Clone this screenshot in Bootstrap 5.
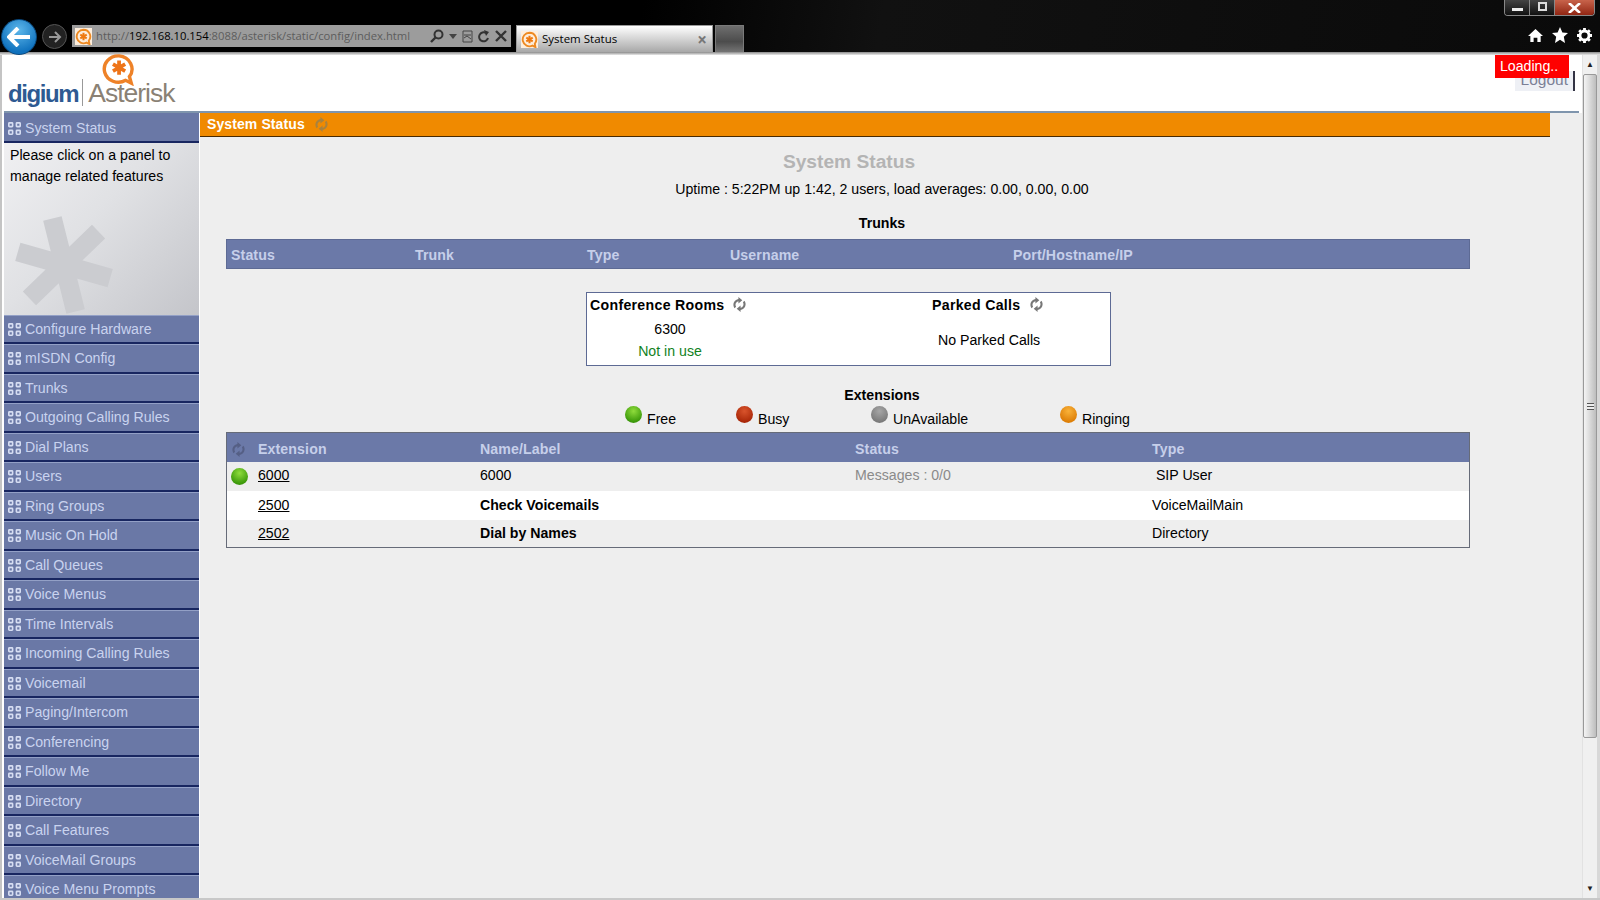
<!doctype html>
<html lang="en">
<head>
<meta charset="UTF-8" />
<title>System Status</title>
<link href="https://cdn.jsdelivr.net/npm/bootstrap@5.3.0/dist/css/bootstrap.min.css" rel="stylesheet" />
<style>
  html, body { height: 100%; overflow: hidden; }
  body { font-family: "Liberation Sans", Arial, sans-serif; font-size: 14.15px; color: #000; background: #eee; }
  .app-shell { width: 1600px; height: 900px; overflow: hidden; }

  /* browser chrome */
  .chrome { height: 52px; flex: none; background: linear-gradient(100deg, #000 40%, #111 55%, #0a0a0a 100%); position: relative; }
  .chrome-line { height: 3px; flex: none; background: linear-gradient(#8a8a8a, #e8e8e8); }
  .nav-cluster { padding-top: 19px; padding-left: 1px; gap: 5px; }
  .back-btn { width: 36px; height: 36px; border-radius: 50%; background: radial-gradient(circle at 50% 30%, #5cb6ea, #0f71bd 75%); border: 1px solid #0a4a80; }
  .fwd-btn { width: 25px; height: 25px; border-radius: 50%; background: #222; border: 1px solid #555; margin-top: 5px; }
  .addr-bar { width: 439px; height: 22px; margin-top: 6px; background: #9c9c9c; padding-left: 3px; font-family: "Open Sans", sans-serif; font-size: 11.25px; color: #5c5c5c; white-space: nowrap; }
  .addr-bar b { font-weight: 400; color: #000; }
  .addr-url { width: 328px; margin-left: 4px; }
  .addr-tools { gap: 5px; margin-left: 6px; }
  .tab-active { width: 197px; height: 27px; margin-top: 6px; background: linear-gradient(#fff, #a8a8a8); border: 1px solid #9a9a9a; border-bottom: 0; font-family: "Open Sans", sans-serif; font-size: 11.5px; padding: 0 5px 0 4px; }
  .tab-x { color: #777; font-size: 17px; font-weight: 700; line-height: 1; }
  .tab-new { width: 29px; height: 27px; margin-top: 6px; margin-left: -3px; background: linear-gradient(#6e6e6e, #4c4c4c 60%, #747474); border: 1px solid #7a7a7a; border-bottom: 0; }
  .win-btns { position: absolute; top: 0; right: 5px; width: 91px; height: 16px; border: 1px solid #888; border-top: 0; border-radius: 0 0 4px 4px; overflow: hidden; }
  .win-min, .win-max { width: 25px; background: linear-gradient(#444, #111); border-right: 1px solid #888; }
  .win-min span { width: 11px; height: 3px; background: #eee; margin-top: 8px; }
  .win-max span { width: 9px; height: 9px; border: 2px solid #ddd; margin-top: 2px; }
  .win-close { flex: 1; background: linear-gradient(#c8634b, #912613); }
  .tool-icons { position: absolute; top: 27px; right: 8px; gap: 9px; }

  /* page */
  .page-body { min-height: 0; }
  .page-main { min-width: 0; }
  .page-rows { min-height: 0; }
  .edge-strip { width: 2px; flex: none; background: #c4c4c4; }
  .top-head { height: 58px; flex: none; background: #fff; position: relative; }
  .head-rule { position: absolute; left: 2px; right: 3px; bottom: 0; height: 2px; background: #7f95ad; }
  .logo-wrap { padding: 0 0 0 6px; position: relative; height: 54px; }
  .logo-digium { font-size: 24px; font-weight: 700; letter-spacing: -1.4px; color: #2e5a92; line-height: 1; margin-top: 27px; }
  .logo-sep { width: 1px; height: 27px; background: #999; margin: 24px 5px 0 4px; }
  .logo-aster { font-size: 26.5px; color: #8a8174; letter-spacing: -1px; line-height: 1; margin-top: 25px; }
  .logo-bubble { position: absolute; left: 98px; top: -1px; }
  .logout-tab { position: absolute; right: 7px; top: 16px; width: 60px; height: 20px; background: #eef0f5; border-right: 2px solid #334; color: #7b7f96; font-size: 15.5px; text-align: right; padding-right: 5px; line-height: 18px; }
  .loading-tag { position: absolute; right: 13px; top: 0; width: 74px; height: 23px; background: #f00; color: #fff; line-height: 22px; padding-left: 5px; }

  .side-col { width: 198px; flex: none; background: #fff; padding-left: 2px; padding-right: 1px; overflow: hidden; }
  .menu-item { height: 29.5px; flex: none; background: #6a78a6; color: #c9d3ef; border-bottom: 2px solid #182660; border-top: 1px solid #93a0c6; padding: 1px 0 0 4px; gap: 4px; white-space: nowrap; }
  .menu-first { border-top-color: #6a78a6; padding-top: 3px; }
  .side-panel { height: 172px; flex: none; position: relative; padding: 2px 6px; line-height: 21.5px; background: linear-gradient(135deg, #f0f0f2 0%, #e0e1e4 45%, #c4c5ca 100%); overflow: hidden; }
  .side-star { position: absolute; left: 10px; top: 72px; }

  .work-col { min-width: 0; background: #eee; }
  .title-strip { width: 1350px; height: 24px; background: #f08a00; border-bottom: 1px solid #4a2a00; color: #fff; font-weight: 700; letter-spacing: .1px; padding-left: 7px; gap: 9px; font-size: 14px; }
  .page-title { width: 1298px; text-align: center; font-size: 19.2px; font-weight: 700; color: #b4b4b4; line-height: 24px; margin-top: 13px; }
  .centre-line { width: 1364px; text-align: center; line-height: 20px; }
  .uptime-line { margin-top: 5px; }
  .trunks-head { margin-top: 14px; font-weight: 700; }
  .data-tbl { width: 1244px; margin-left: 26px; background: #eee; border: 1px solid #5d6a94; table-layout: fixed; border-collapse: separate; border-spacing: 0; }
  .data-tbl th { background: #6b79a8; color: #c6cfea; font-weight: 700; height: 28px; padding: 4px 0 0 4px; vertical-align: middle; letter-spacing: .12px; }
  .data-tbl td { height: 29.2px; padding: 0; vertical-align: middle; background: #eee; }
  .data-tbl tr.row-white td { background: #fff; }
  .data-tbl tr.row-end td { height: 27px; }
  .trunks-tbl { margin-top: 6px; }
  .ext-tbl { margin-top: 0; border-color: #666b78; }
  .ext-tbl th { padding-left: 0; height: 28.5px; }
  .tc-1 { width: 184px; } .tc-2 { width: 172px; } .tc-3 { width: 143px; } .tc-4 { width: 283px; }
  .ec-1 { width: 31px; } .ec-2 { width: 222px; } .ec-3 { width: 375px; } .ec-4 { width: 297px; }
  .ext-tbl a { color: #000; }
  .data-tbl .ext-dot-cell { padding-left: 4px; }
  .msg-cell { color: #8a8a8a; }
  .conf-box { width: 525px; height: 74px; margin: 23px 0 0 386px; background: #fff; border: 1px solid #5d6a94; }
  .conf-left { width: 345px; padding: 3px 3px; }
  .conf-right { flex: 1; padding: 3px 0; }
  .conf-title { font-weight: 700; letter-spacing: .3px; gap: 8px; height: 20px; }
  .conf-title svg { margin-top: -4px; }
  .conf-num { width: 160px; text-align: center; line-height: 22px; margin-top: 2px; }
  .conf-free { color: #12821e; }
  .no-parked { width: 112px; margin: 14px 0 0 6px; white-space: nowrap; }
  .ext-head { margin-top: 19px; font-weight: 700; }
  .legend-row { margin: 1px 0 0 425px; height: 26px; }
  .legend-item { gap: 5px; }
  .legend-free { width: 111px; }
  .legend-busy { width: 135px; }
  .legend-un { width: 189px; }
  .ball { width: 17px; height: 17px; border-radius: 50%; flex: none; display: inline-block; }
  .legend-lbl { margin-top: 3px; }
  .ball-green { background: radial-gradient(circle at 50% 30%, #8fdc3c, #3f9c0c 70%, #2f7f08); }
  .ball-red { background: radial-gradient(circle at 50% 30%, #d9542c, #a92708 75%); }
  .ball-grey { background: radial-gradient(circle at 50% 30%, #a6a6a6, #777 80%); }
  .ball-amber { background: radial-gradient(circle at 50% 30%, #f9b23a, #dd7e06 75%); }

  /* scrollbar */
  .v-scroll { width: 18px; flex: none; background: #f0f0f0; border-left: 1px solid #e2e2e2; border-right: 3px solid #d8d8d8; }
  .sb-arrow { height: 19px; flex: none; color: #222; font-size: 8px; line-height: 19px; text-align: center; }
  .sb-thumb { height: 664px; flex: none; background: linear-gradient(90deg, #f4f4f4, #dcdcdc 45%, #bdbdbd); border: 1px solid #999; border-radius: 2px; }
  .sb-grip { width: 7px; height: 7px; border-top: 1px solid #555; border-bottom: 1px solid #555; background: linear-gradient(#eee 40%, #555 40%, #555 60%, #eee 60%); }
  .page-foot { height: 2px; flex: none; background: #c8c8c8; }
</style>
</head>
<body>
<svg width="0" height="0" class="position-absolute">
  <defs>
    <symbol id="ico-panel" viewBox="0 0 12 12">
      <g fill="none" stroke="#d6ddf2" stroke-width="1.5">
        <rect x=".75" y=".75" width="3.500" height="3.500" rx=".6" /><rect x="7.75" y=".75" width="3.500" height="3.500" rx=".6" />
        <rect x=".75" y="7.75" width="3.500" height="3.500" rx=".6" /><rect x="7.75" y="7.75" width="3.500" height="3.500" rx=".6" />
      </g>
    </symbol>
    <symbol id="ico-refresh" viewBox="0 0 14 14">
      <path d="M2.400 10.500A5.400 5.400 0 0 1 6 1.900V0l3.600 3L6 6V3.900A3.400 3.400 0 0 0 3.800 9zM11.600 3.500A5.400 5.400 0 0 1 8 12.100V14l-3.600-3L8 8v2.100A3.400 3.400 0 0 0 10.200 5z" fill="currentColor" />
    </symbol>
    <symbol id="ico-fav" viewBox="0 0 20 20">
      <rect width="20" height="20" fill="#fdeedd" />
      <path d="M10 2a8 8 0 1 0 3.500 15.200L17 19l-.8-4A8 8 0 0 0 10 2z" fill="none" stroke="#ee8a22" stroke-width="2.200" />
      <path d="M10 5.500v9M6.200 7.800l7.600 4.400M13.800 7.800l-7.600 4.400" stroke="#ee7a12" stroke-width="2.400" />
    </symbol>
  </defs>
</svg>

<div class="app-shell d-flex flex-column">
  <div class="chrome d-flex">
    <div class="nav-cluster d-flex align-items-start">
      <div class="back-btn d-flex align-items-center justify-content-center">
        <svg width="24" height="20" viewBox="0 0 24 20"><path d="M11 1 2 10l9 9M3 10h20" fill="none" stroke="#fff" stroke-width="4" /></svg>
      </div>
      <div class="fwd-btn d-flex align-items-center justify-content-center">
        <svg width="14" height="12" viewBox="0 0 14 12"><path d="M7 1l5 5-5 5M12 6H1" fill="none" stroke="#999" stroke-width="2" /></svg>
      </div>
      <div class="addr-bar d-flex align-items-center">
        <svg width="17" height="17"><use href="#ico-fav" /></svg>
        <span class="addr-url">http://<b>192.168.10.154</b>:8088/asterisk/static/config/index.html</span>
        <span class="addr-tools d-flex align-items-center">
          <svg width="14" height="14" viewBox="0 0 14 14"><circle cx="8.500" cy="5.500" r="4" fill="none" stroke="#333" stroke-width="2" /><path d="M5.500 8.500 1 13" stroke="#333" stroke-width="2.400" /></svg>
          <svg width="8" height="5" viewBox="0 0 8 5"><path d="M0 0h8L4 5z" fill="#444" /></svg>
          <svg width="11" height="13" viewBox="0 0 11 13"><path d="M1 1h9v11H1zM2 8l3-2 4 3M2 5h7" fill="none" stroke="#444" /></svg>
          <svg width="12" height="13" viewBox="0 0 12 13"><path d="M10 8a4.500 4.500 0 1 1-2-5" fill="none" stroke="#333" stroke-width="2" /><path d="M6 0l5 2-3 4z" fill="#333" /></svg>
          <svg width="12" height="12" viewBox="0 0 12 12"><path d="M1 1l10 10M11 1 1 11" stroke="#333" stroke-width="2.400" /></svg>
        </span>
      </div>
      <div class="tab-active d-flex align-items-center">
        <svg width="17" height="17" class="me-1"><use href="#ico-fav" /></svg>
        <span>System Status</span>
        <span class="tab-x ms-auto">×</span>
      </div>
      <div class="tab-new"></div>
    </div>
    <div class="win-btns d-flex">
      <div class="win-min d-flex justify-content-center"><span></span></div>
      <div class="win-max d-flex justify-content-center"><span></span></div>
      <div class="win-close d-flex align-items-center justify-content-center">
        <svg width="13" height="10" viewBox="0 0 13 10"><path d="M1 0l11 10M12 0 1 10" stroke="#fff" stroke-width="2.600" /></svg>
      </div>
    </div>
    <div class="tool-icons d-flex align-items-center">
      <svg width="15" height="15" viewBox="0 0 16 16"><path d="M8 1 0 8.500h2.500V15H6v-4.500h4V15h3.500V8.500H16z" fill="#fff" /></svg>
      <svg width="16" height="16" viewBox="0 0 16 16"><path d="m8 0 2.400 5.400 5.600.6-4.200 3.800L13 16 8 12.800 3 16l1.200-6.200L0 6l5.600-.6z" fill="#fff" /></svg>
      <svg width="15" height="15" viewBox="0 0 16 16"><circle cx="8" cy="8" r="4.800" fill="none" stroke="#fff" stroke-width="3" /><path d="M8 0v3M8 13v3M0 8h3M13 8h3M2.300 2.300l2.100 2.100M11.600 11.600l2.100 2.100M13.700 2.300l-2.100 2.100M4.400 11.600l-2.100 2.100" stroke="#fff" stroke-width="3" /></svg>
    </div>
  </div>
  <div class="chrome-line"></div>

  <div class="page-body flex-grow-1 d-flex">
    <div class="edge-strip"></div>
    <div class="page-main flex-grow-1 d-flex flex-column">
      <div class="top-head">
        <div class="logo-wrap d-flex">
          <span class="logo-digium">digium</span>
          <span class="logo-sep"></span>
          <span class="logo-aster">Asterisk</span>
          <svg class="logo-bubble" width="40" height="32" viewBox="0 0 40 34">
            <path d="M19 2a15 14 0 1 0 7 26l6 3-2-7A15 14 0 0 0 19 2z" fill="#fff" stroke="#ee8228" stroke-width="3.600" />
            <path d="M19 7v15M12.500 10.800l13 7.400M25.500 10.800l-13 7.400" stroke="#ee7418" stroke-width="4" />
          </svg>
        </div>
        <div class="logout-tab">Logout</div>
        <div class="loading-tag">Loading..</div>
        <div class="head-rule"></div>
      </div>

      <div class="page-rows flex-grow-1 d-flex">
        <div class="side-col d-flex flex-column">
          <div class="menu-item menu-first d-flex align-items-center"><svg width="13" height="13"><use href="#ico-panel" /></svg>System Status</div>
          <div class="side-panel">
            Please click on a panel to<br />manage related features
            <svg class="side-star" width="100" height="100" viewBox="0 0 100 100">
              <path d="M50 2v96M8.400 26l83.200 48M91.600 26 8.400 74" transform="rotate(-14 50 50)" stroke="#cbccd0" stroke-width="19" fill="none" />
            </svg>
          </div>
          <div id="sideMenu" class="d-flex flex-column"></div>
        </div>

        <div class="work-col flex-grow-1">
          <div class="title-strip d-flex align-items-center">
            <span>System Status</span>
            <svg width="15" height="15" color="#a8823f"><use href="#ico-refresh" /></svg>
          </div>
          <div class="page-title">System Status</div>
          <div class="centre-line uptime-line">Uptime : 5:22PM up 1:42, 2 users, load averages: 0.00, 0.00, 0.00</div>
          <div class="centre-line trunks-head">Trunks</div>

          <table class="data-tbl trunks-tbl">
            <colgroup><col class="tc-1" /><col class="tc-2" /><col class="tc-3" /><col class="tc-4" /><col /></colgroup>
            <thead><tr><th>Status</th><th>Trunk</th><th>Type</th><th>Username</th><th>Port/Hostname/IP</th></tr></thead>
          </table>

          <div class="conf-box d-flex">
            <div class="conf-left">
              <div class="conf-title d-flex align-items-center">Conference Rooms
                <svg width="15" height="15" color="#777"><use href="#ico-refresh" /></svg>
              </div>
              <div class="conf-num">6300</div>
              <div class="conf-num conf-free mt-0">Not in use</div>
            </div>
            <div class="conf-right">
              <div class="conf-title d-flex align-items-center">Parked Calls
                <svg width="15" height="15" color="#777"><use href="#ico-refresh" /></svg>
              </div>
              <div class="no-parked">No Parked Calls</div>
            </div>
          </div>

          <div class="centre-line ext-head">Extensions</div>
          <div class="legend-row d-flex">
            <div class="legend-item legend-free d-flex"><span class="ball ball-green"></span><span class="legend-lbl">Free</span></div>
            <div class="legend-item legend-busy d-flex"><span class="ball ball-red"></span><span class="legend-lbl">Busy</span></div>
            <div class="legend-item legend-un d-flex"><span class="ball ball-grey"></span><span class="legend-lbl">UnAvailable</span></div>
            <div class="legend-item d-flex"><span class="ball ball-amber"></span><span class="legend-lbl">Ringing</span></div>
          </div>

          <table class="data-tbl ext-tbl">
            <colgroup><col class="ec-1" /><col class="ec-2" /><col class="ec-3" /><col class="ec-4" /><col /></colgroup>
            <thead>
              <tr>
                <th class="ext-dot-cell"><svg width="15" height="15" color="#555f85"><use href="#ico-refresh" /></svg></th>
                <th>Extension</th><th>Name/Label</th><th>Status</th><th>Type</th>
              </tr>
            </thead>
            <tbody>
              <tr>
                <td class="ext-dot-cell"><span class="ball ball-green d-block"></span></td>
                <td><a href="#">6000</a></td><td>6000</td><td class="msg-cell">Messages : 0/0</td><td>&nbsp;SIP User</td>
              </tr>
              <tr class="row-white">
                <td></td><td><a href="#">2500</a></td><td><b>Check Voicemails</b></td><td></td><td>VoiceMailMain</td>
              </tr>
              <tr class="row-end">
                <td></td><td><a href="#">2502</a></td><td><b>Dial by Names</b></td><td></td><td>Directory</td>
              </tr>
            </tbody>
          </table>
        </div>
      </div>
    </div>
    <div class="v-scroll d-flex flex-column align-items-stretch">
      <div class="sb-arrow">&#9650;</div>
      <div class="sb-thumb d-flex align-items-center justify-content-center"><span class="sb-grip"></span></div>
      <div class="flex-grow-1"></div>
      <div class="sb-arrow">&#9660;</div>
    </div>
  </div>
  <div class="page-foot"></div>
</div>

<script>
  // left hand panels
  const panels = ['Configure Hardware', 'mISDN Config', 'Trunks', 'Outgoing Calling Rules', 'Dial Plans', 'Users', 'Ring Groups', 'Music On Hold', 'Call Queues', 'Voice Menus', 'Time Intervals', 'Incoming Calling Rules', 'Voicemail', 'Paging/Intercom', 'Conferencing', 'Follow Me', 'Directory', 'Call Features', 'VoiceMail Groups', 'Voice Menu Prompts'];
  document.getElementById('sideMenu').innerHTML = panels.map((p) =>
    `<div class="menu-item d-flex align-items-center"><svg width="13" height="13"><use href="#ico-panel" /></svg>${p}</div>`
  ).join('');
</script>
<script src="https://cdn.jsdelivr.net/npm/bootstrap@5.3.0/dist/js/bootstrap.bundle.min.js"></script>
</body>
</html>
